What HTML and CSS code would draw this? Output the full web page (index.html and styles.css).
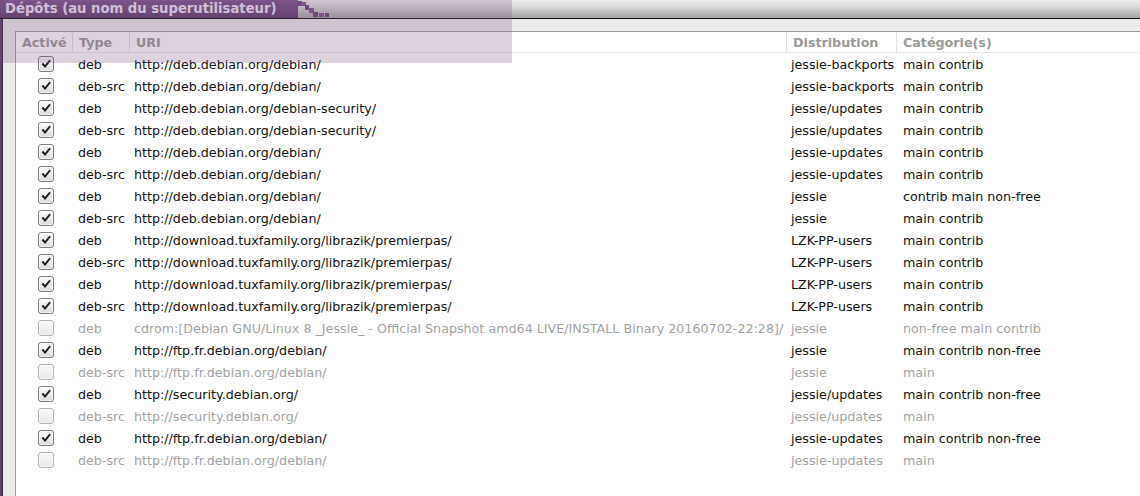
FILE: index.html
```html
<!DOCTYPE html>
<html lang="fr">
<head>
  <meta charset="UTF-8" />
  <title>Dépôts</title>
  <link rel="stylesheet" href="styles.css">
</head>
<body>
  <svg class="defs" width="0" height="0">
    <symbol id="tick" viewBox="0 0 16 16">
      <path d="M3 8.3 L4.8 6.7 L6.8 9.1 L11.8 3 L13.6 4.4 L6.9 12.5 Z" fill="#1e1e1e"/>
    </symbol>
  </svg>

  <div class="window">
    <div class="titlebar">
      <div class="tab">Dépôts (au nom du superutilisateur)</div>
      <svg class="steps" width="36" height="18" viewBox="0 0 36 18">
        <rect x="0" y="1" width="4" height="5" fill="#6d4a7b"/>
        <rect x="3" y="2" width="5" height="4" fill="#7c5889"/>
        <rect x="7" y="5" width="4" height="5" fill="#6d4a7b"/>
        <rect x="11" y="8" width="5" height="5" fill="#7a5687"/>
        <rect x="15" y="12" width="5" height="5" fill="#6a4777"/>
        <rect x="21" y="13" width="5" height="4" fill="#7d5a8a"/>
        <rect x="27" y="13" width="4" height="4" fill="#6a4777"/>
      </svg>
    </div>

    <div class="frame">
      <div class="tree">
        <div class="row head">
          <span>Activé</span>
          <span>Type</span>
          <span>URI</span>
          <span>Distribution</span>
          <span>Catégorie(s)</span>
        </div>

        <div class="row">
          <span class="check"><i class="box"><svg><use href="#tick"/></svg></i></span>
          <span>deb</span><span>http://deb.debian.org/debian/</span><span>jessie-backports</span><span>main contrib</span>
        </div>
        <div class="row">
          <span class="check"><i class="box"><svg><use href="#tick"/></svg></i></span>
          <span>deb-src</span><span>http://deb.debian.org/debian/</span><span>jessie-backports</span><span>main contrib</span>
        </div>
        <div class="row">
          <span class="check"><i class="box"><svg><use href="#tick"/></svg></i></span>
          <span>deb</span><span>http://deb.debian.org/debian-security/</span><span>jessie/updates</span><span>main contrib</span>
        </div>
        <div class="row">
          <span class="check"><i class="box"><svg><use href="#tick"/></svg></i></span>
          <span>deb-src</span><span>http://deb.debian.org/debian-security/</span><span>jessie/updates</span><span>main contrib</span>
        </div>
        <div class="row">
          <span class="check"><i class="box"><svg><use href="#tick"/></svg></i></span>
          <span>deb</span><span>http://deb.debian.org/debian/</span><span>jessie-updates</span><span>main contrib</span>
        </div>
        <div class="row">
          <span class="check"><i class="box"><svg><use href="#tick"/></svg></i></span>
          <span>deb-src</span><span>http://deb.debian.org/debian/</span><span>jessie-updates</span><span>main contrib</span>
        </div>
        <div class="row">
          <span class="check"><i class="box"><svg><use href="#tick"/></svg></i></span>
          <span>deb</span><span>http://deb.debian.org/debian/</span><span>jessie</span><span>contrib main non-free</span>
        </div>
        <div class="row">
          <span class="check"><i class="box"><svg><use href="#tick"/></svg></i></span>
          <span>deb-src</span><span>http://deb.debian.org/debian/</span><span>jessie</span><span>main contrib</span>
        </div>
        <div class="row">
          <span class="check"><i class="box"><svg><use href="#tick"/></svg></i></span>
          <span>deb</span><span>http://download.tuxfamily.org/librazik/premierpas/</span><span>LZK-PP-users</span><span>main contrib</span>
        </div>
        <div class="row">
          <span class="check"><i class="box"><svg><use href="#tick"/></svg></i></span>
          <span>deb-src</span><span>http://download.tuxfamily.org/librazik/premierpas/</span><span>LZK-PP-users</span><span>main contrib</span>
        </div>
        <div class="row">
          <span class="check"><i class="box"><svg><use href="#tick"/></svg></i></span>
          <span>deb</span><span>http://download.tuxfamily.org/librazik/premierpas/</span><span>LZK-PP-users</span><span>main contrib</span>
        </div>
        <div class="row">
          <span class="check"><i class="box"><svg><use href="#tick"/></svg></i></span>
          <span>deb-src</span><span>http://download.tuxfamily.org/librazik/premierpas/</span><span>LZK-PP-users</span><span>main contrib</span>
        </div>
        <div class="row off">
          <span class="check"><i class="box"></i></span>
          <span>deb</span><span>cdrom:[Debian GNU/Linux 8 _Jessie_ - Official Snapshot amd64 LIVE/INSTALL Binary 20160702-22:28]/</span><span>jessie</span><span>non-free main contrib</span>
        </div>
        <div class="row">
          <span class="check"><i class="box"><svg><use href="#tick"/></svg></i></span>
          <span>deb</span><span>http://ftp.fr.debian.org/debian/</span><span>jessie</span><span>main contrib non-free</span>
        </div>
        <div class="row off">
          <span class="check"><i class="box"></i></span>
          <span>deb-src</span><span>http://ftp.fr.debian.org/debian/</span><span>jessie</span><span>main</span>
        </div>
        <div class="row">
          <span class="check"><i class="box"><svg><use href="#tick"/></svg></i></span>
          <span>deb</span><span>http://security.debian.org/</span><span>jessie/updates</span><span>main contrib non-free</span>
        </div>
        <div class="row off">
          <span class="check"><i class="box"></i></span>
          <span>deb-src</span><span>http://security.debian.org/</span><span>jessie/updates</span><span>main</span>
        </div>
        <div class="row">
          <span class="check"><i class="box"><svg><use href="#tick"/></svg></i></span>
          <span>deb</span><span>http://ftp.fr.debian.org/debian/</span><span>jessie-updates</span><span>main contrib non-free</span>
        </div>
        <div class="row off">
          <span class="check"><i class="box"></i></span>
          <span>deb-src</span><span>http://ftp.fr.debian.org/debian/</span><span>jessie-updates</span><span>main</span>
        </div>
      </div>
    </div>

    <div class="tint"></div>
  </div>
</body>
</html>
```

FILE: styles.css
```css
:root {
  --frame: #ececec;
  --edge: #5e3f6c;
  --line: #9c9c9c;
  --text: #111;
  --muted: #a3a3a3;
}

body {
  margin: 0;
  background: var(--frame);
  font-family: 'DejaVu Sans', sans-serif;
  font-size: 12.7px;
  color: var(--text);
  overflow: hidden;
}

.defs {
  position: absolute;
}

.window {
  position: relative;
  display: flex;
  flex-direction: column;
  height: 496px;
  border-left: 2px solid var(--edge);
  box-shadow: inset 1px 0 0 #3a2a40;
}

.titlebar {
  display: flex;
  align-items: stretch;
  flex: none;
  height: 18px;
  margin-left: -2px;
  border-bottom: 1px solid #111;
  background: linear-gradient(#eeeeee, #dadada 35%, #a6a6a6);
}

.tab {
  width: 293px;
  padding-left: 5px;
  line-height: 18px;
  font-weight: bold;
  font-size: 13.2px;
  color: #ebe3ef;
  white-space: nowrap;
  background: linear-gradient(#8a5c98 0, #7a548a 1px, #6c4a7a 60%, #5c3d69);
}

.steps {
  display: block;
}

.frame {
  flex: 1;
  display: flex;
  padding: 12px 0 0 13px;
  min-height: 0;
}

.tree {
  flex: 1;
  background: #fff;
  border-left: 1px solid var(--line);
  border-top: 1px solid var(--line);
  overflow: hidden;
}

.row {
  display: grid;
  grid-template-columns: 57px 57px 657px 110px 1fr;
  height: 22px;
  align-items: center;
  white-space: nowrap;
}

.row > span {
  padding-left: 4px;
  overflow: hidden;
}

.row > span:nth-child(2) {
  padding-left: 5px;
}

.row > span:nth-child(5) {
  padding-left: 6px;
}

.row.head {
  height: 20px;
  border-bottom: 1px solid #e6e6e6;
  font-weight: bold;
  color: #9a9a9a;
  align-items: stretch;
}

.row.head span {
  display: flex;
  align-items: center;
  padding-left: 6px;
  border-right: 1px solid #e2e2e2;
}

.row.head span:last-child {
  border-right: none;
}

.row.off {
  color: var(--muted);
}

.check {
  display: flex;
  justify-content: center;
}

.row > span.check {
  padding-left: 2px;
}

.box {
  display: block;
  width: 14px;
  height: 14px;
  border: 1px solid #7c7c7c;
  border-radius: 3px;
  background: linear-gradient(#fbfbfb, #dcdcdc);
  box-shadow: inset 0 0 0 1px rgba(255, 255, 255, 0.6);
}

.box svg {
  display: block;
  width: 14px;
  height: 14px;
}

.row.off .box {
  border-color: #b4b4b4;
  background: linear-gradient(#f8f8f8, #e8e8e8);
}

/* translucent selection tint laid over the top-left corner */
.tint {
  position: absolute;
  left: -2px;
  top: 0;
  width: 512px;
  height: 63px;
  background: rgba(119, 79, 127, 0.25);
  pointer-events: none;
}
```
